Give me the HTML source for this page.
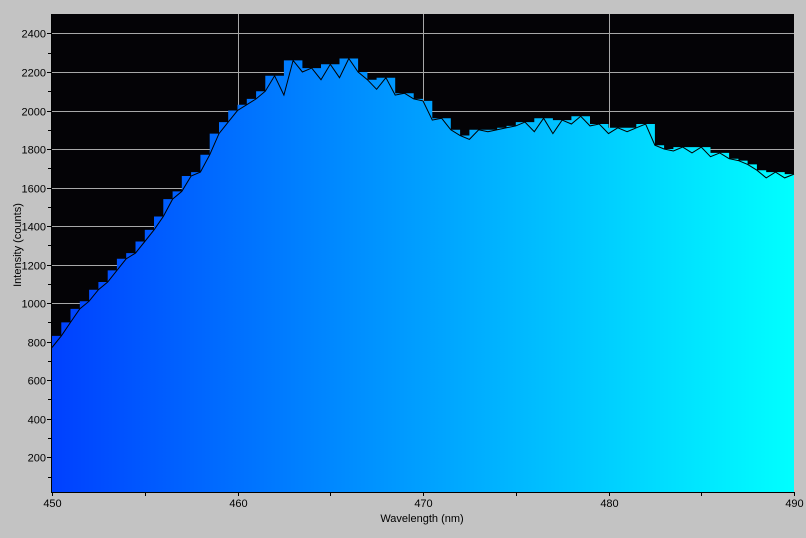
<!DOCTYPE html>
<html><head><style>
body{margin:0;width:806px;height:538px;background:#c3c3c3;overflow:hidden;font-family:"Liberation Sans",sans-serif}
</style></head><body>
<svg id="s" width="806" height="538" xmlns="http://www.w3.org/2000/svg" style="position:absolute;left:0;top:0">
<defs><linearGradient id="g" x1="0" x2="1" y1="0" y2="0"><stop offset="0" stop-color="#0040ff"/><stop offset="1" stop-color="#00ffff"/></linearGradient></defs>
<rect x="52" y="14" width="742" height="478" fill="#040306"/>
<g id="grid" stroke="#a8a8a8" stroke-width="1"></g>
<g id="plot"></g>
<g id="ax" stroke="#000" stroke-width="1"></g>
<g id="lab" font-size="11" fill="#000"></g>
<text x="422" y="522" font-size="11" text-anchor="middle">Wavelength (nm)</text>
<text transform="translate(21,245) rotate(-90)" font-size="11" text-anchor="middle">Intensity (counts)</text>
</svg>
<script>
var v=[770,830,900,970,1010,1070,1110,1170,1230,1260,1320,1380,1450,1540,1580,1660,1680,1770,1880,1940,2000,2030,2060,2100,2180,2080,2260,2200,2220,2160,2240,2170,2270,2200,2160,2110,2170,2080,2090,2060,2050,1950,1960,1900,1870,1850,1900,1890,1900,1910,1920,1940,1890,1960,1880,1950,1930,1970,1920,1930,1880,1910,1890,1910,1930,1820,1800,1790,1810,1780,1810,1760,1780,1750,1740,1720,1690,1650,1680,1650,1670];
function X(w){return 52+(w-450)*18.55}
function Y(c){return 495.8-c*0.19265}
var ns="http://www.w3.org/2000/svg";
function el(p,t,a,txt){var e=document.createElementNS(ns,t);for(var k in a)e.setAttribute(k,a[k]);if(txt)e.textContent=txt;document.getElementById(p).appendChild(e);return e}
for(var c=200;c<=2400;c+=200){var y=Math.round(Y(c))+.5;el('grid','line',{x1:52,x2:794,y1:y,y2:y})}
[460,470,480].forEach(function(w){var x=Math.round(X(w))+.5;el('grid','line',{x1:x,x2:x,y1:14,y2:492})});
var d="M52,492";
for(var i=0;i<v.length-1;i++){var m=Math.max(v[i],v[i+1]);d+=" L"+X(450+i*.5).toFixed(1)+","+Y(m).toFixed(1)+" L"+X(450+(i+1)*.5).toFixed(1)+","+Y(m).toFixed(1)}
d+=" L794,492Z";
el('plot','path',{d:d,fill:'url(#g)'});
var pts=v.map(function(c,i){return X(450+i*.5).toFixed(1)+","+Y(c).toFixed(1)}).join(" ");
el('plot','polyline',{points:pts,fill:'none',stroke:'#000','stroke-width':1});
el('ax','line',{x1:51.5,x2:51.5,y1:14,y2:493});
el('ax','line',{x1:51,x2:795,y1:492.5,y2:492.5});
for(var c=100;c<=2400;c+=100){var y=Math.round(Y(c))+.5;el('ax','line',{x1:c%200?48:47,x2:52,y1:y,y2:y});if(c%200==0)el('lab','text',{x:46,y:y+4,'text-anchor':'end'},c)}
for(var w=450;w<=490;w+=5){var x=Math.round(X(w))+.5;el('ax','line',{x1:x,x2:x,y1:492,y2:496});if(w%10==0)el('lab','text',{x:x,y:507,'text-anchor':'middle'},w)}
</script>
</body></html>
